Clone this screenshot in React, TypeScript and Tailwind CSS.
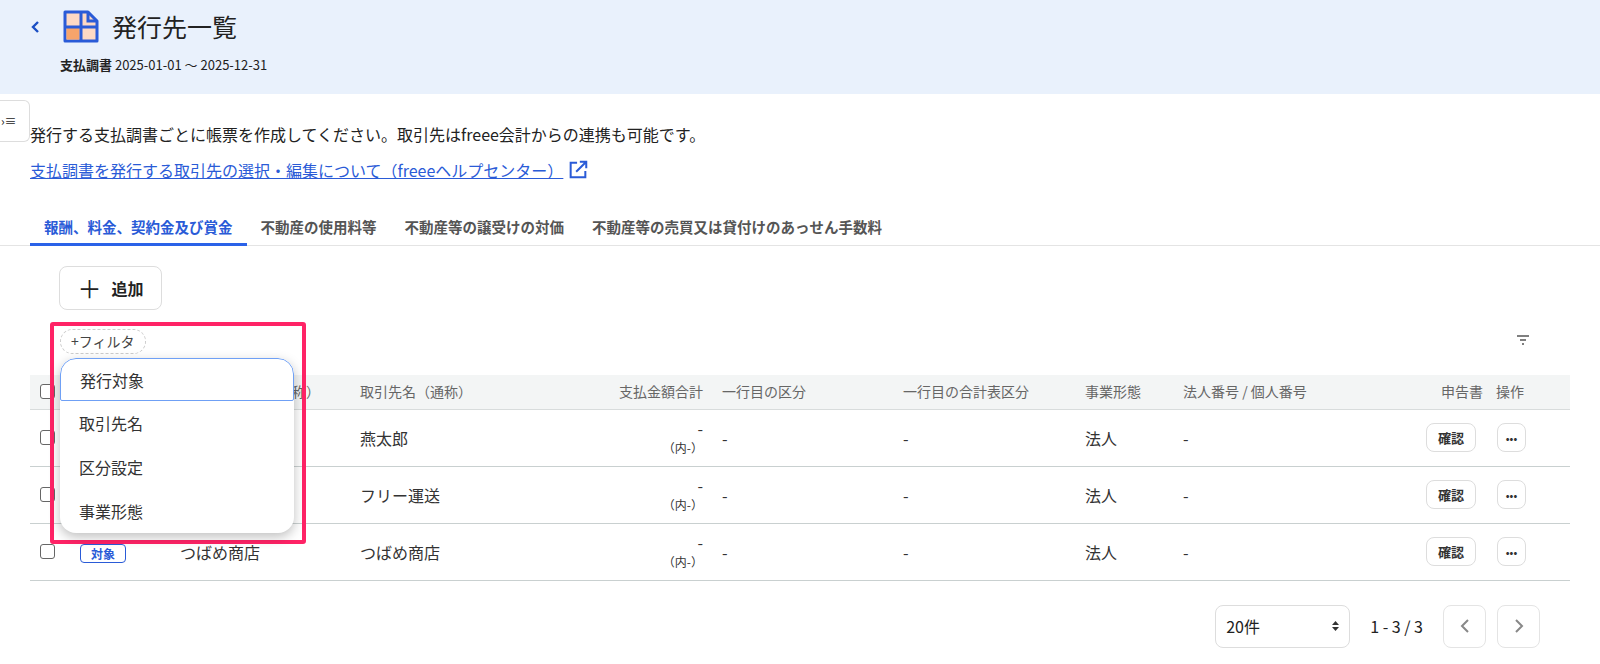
import React from "react";

const F = { fontFamily: '"Noto Sans CJK JP", "Noto Sans", sans-serif' };
const cols = "grid grid-cols-[40px_100px_180px_250px_112px_181px_182px_98px_227px_86px_62px]";

function Box() {
  return <span className="inline-block w-[15px] h-[15px] border border-[#666] rounded-[3px] bg-white" />;
}

const rows = [
  { a: "燕太郎", b: "燕太郎" },
  { a: "フリー運送", b: "フリー運送" },
  { a: "つばめ商店", b: "つばめ商店" },
];

export default function App() {
  return (
    <div style={F} className="w-[1600px] h-[664px] overflow-hidden bg-white text-[#222] relative">
      <div className="h-[94px] bg-[#e9f1fc] pl-[30px] pt-[10px]">
        <div className="flex items-center h-[34px]">
          <svg width="12" height="14" viewBox="0 0 12 14" className="mr-[20px]"><path d="M8 2 L3 7 L8 12" stroke="#1b4fc4" strokeWidth="2.4" fill="none" /></svg>
          <svg width="38" height="34" viewBox="0 0 38 34">
            <path d="M3 2 H26 L35 11 V31 H3 Z" fill="#fdd9c4" stroke="#2a5bd7" strokeWidth="3" strokeLinejoin="round" />
            <rect x="4.5" y="18" width="13" height="11.5" fill="#f7a46b" />
            <path d="M19 2 V31 M3 17 H35 M26 2 V11 H35" stroke="#2a5bd7" strokeWidth="3" fill="none" />
          </svg>
          <span className="ml-[12px] text-[25px] text-[#222]">発行先一覧</span>
        </div>
        <div className="mt-[11px] pl-[30px] text-[13px]"><span className="font-bold">支払調書</span> 2025-01-01 ～ 2025-12-31</div>
      </div>
      <div className="absolute left-0 top-[100px] w-[30px] h-[42px] bg-white border border-[#ddd] border-l-0 rounded-r-md flex items-center justify-start pl-[1px] text-[12px]">›≡</div>
      <div className="px-[30px]">
        <div className="mt-[28px] text-[16px]">発行する支払調書ごとに帳票を作成してください。取引先はfreee会計からの連携も可能です。</div>
        <div className="mt-[12px] flex items-center text-[16px] text-[#2a5bd7]">
          <span className="underline">支払調書を発行する取引先の選択・編集について（freeeヘルプセンター）</span>
          <svg width="22" height="22" viewBox="0 0 24 24" className="ml-[4px]" fill="none" stroke="#2a5bd7" strokeWidth="2.2"><path d="M11 4H4v16h16v-7M14 3h7v7M21 3 10 14" /></svg>
        </div>
      </div>
      <div className="mt-[34px] border-b border-[#e4e4e4] flex pl-[30px] text-[14.5px] font-bold text-[#555]">
        <div className="px-[14px] pb-[5px] text-[#2a5bd7] border-b-[3px] border-[#2a62e8] -mb-px">報酬、料金、契約金及び賞金</div>
        <div className="px-[14px] pb-[5px]">不動産の使用料等</div>
        <div className="px-[14px] pb-[5px]">不動産等の譲受けの対価</div>
        <div className="px-[14px] pb-[5px]">不動産等の売買又は貸付けのあっせん手数料</div>
      </div>
      <div className="px-[30px]">
        <div className="mt-[20px] ml-[29px] w-[103px] h-[44px] border border-[#ddd] rounded-lg flex items-center justify-center gap-[10px] text-[16px] font-bold">
          <span className="text-[24px] font-normal leading-none">＋</span>
          <span>追加</span>
        </div>
        <div className="h-[65px] flex items-end justify-end pr-[40px] pb-[30px]">
          <svg width="14" height="10" viewBox="0 0 14 10"><path d="M1 1h12M4 5h6M6 9h2" stroke="#555" strokeWidth="1.5" /></svg>
        </div>
        <div>
          <div className={`${cols} h-[35px] items-center bg-[#f3f5f5] border-b border-[#d8dcdc] text-[14px] text-[#666]`}>
            <div className="pl-[10px] flex"><Box /></div>
            <div className="pl-[10px]">発行対象</div>
            <div className="pl-[10px]">取引先名（正式名称）</div>
            <div className="pl-[10px]">取引先名（通称）</div>
            <div className="text-right pr-[9px]">支払金額合計</div>
            <div className="pl-[10px]">一行目の区分</div>
            <div className="pl-[10px]">一行目の合計表区分</div>
            <div className="pl-[10px]">事業形態</div>
            <div className="pl-[10px]">法人番号 / 個人番号</div>
            <div className="text-right pr-[3px]">申告書</div>
            <div className="pl-[10px]">操作</div>
          </div>
          {rows.map((r, i) => (
            <div key={i} className={`${cols} h-[57px] items-center border-b border-[#c9d0d0] text-[16px] text-[#333]`}>
              <div className="pl-[10px] flex"><Box /></div>
              <div className="pl-[10px]"><span className="inline-block px-[10px] border border-[#2a5bd7] rounded text-[12px] font-bold text-[#2a5bd7] leading-[17px]">対象</span></div>
              <div className="pl-[10px]">{r.a}</div>
              <div className="pl-[10px]">{r.b}</div>
              <div className="text-right pr-[9px] leading-[19px]"><div>-</div><div className="text-[12px]">（内-）</div></div>
              <div className="pl-[10px]">-</div>
              <div className="pl-[10px]">-</div>
              <div className="pl-[10px]">法人</div>
              <div className="pl-[10px]">-</div>
              <div className="flex justify-end pr-[10px]"><span className="w-[50px] h-[29px] border border-[#ddd] rounded-lg flex items-center justify-center text-[13px] font-bold">確認</span></div>
              <div className="pl-[11px]"><span className="w-[29px] h-[29px] border border-[#ddd] rounded-lg flex items-center justify-center text-[10px] font-bold leading-none">•••</span></div>
            </div>
          ))}
        </div>
        <div className="mt-[24px] flex items-center justify-end pr-[30px] text-[16px]">
          <div className="w-[135px] h-[43px] border border-[#ddd] rounded-lg flex items-center justify-between px-[10px]">
            <span>20件</span>
            <svg width="7" height="12" viewBox="0 0 7 12"><path d="M0 5 3.5 1 7 5ZM0 7h7L3.5 11Z" fill="#333" /></svg>
          </div>
          <span className="ml-[20px] mr-[20px]">1 - 3 / 3</span>
          <div className="w-[43px] h-[43px] border border-[#e4e4e4] rounded-lg flex items-center justify-center"><svg width="10" height="14" viewBox="0 0 10 14"><path d="M8 1 2 7l6 6" stroke="#888" strokeWidth="2" fill="none" /></svg></div>
          <div className="ml-[11px] w-[43px] h-[43px] border border-[#e4e4e4] rounded-lg flex items-center justify-center"><svg width="10" height="14" viewBox="0 0 10 14"><path d="M2 1l6 6-6 6" stroke="#888" strokeWidth="2" fill="none" /></svg></div>
        </div>
      </div>
      <div className="absolute left-[50px] top-[322px] w-[256px] h-[222px] border-[4px] border-[#ff2366] rounded-[3px]">
        <div className="absolute left-[6px] top-[3px] h-[25px] px-[10px] border border-dashed border-[#ccc] rounded-full flex items-center text-[14px] text-[#444] bg-white">+フィルタ</div>
        <div className="absolute left-[6px] top-[32px] w-[234px] bg-white rounded-[16px] shadow-[0_4px_12px_rgba(0,0,0,0.25)] text-[16px] text-[#333] overflow-hidden">
          <div className="h-[43px] flex items-center pl-[19px] border border-[#6fa0f5] rounded-t-[16px] rounded-b-[2px]">発行対象</div>
          <div className="h-[44px] flex items-center pl-[19px]">取引先名</div>
          <div className="h-[44px] flex items-center pl-[19px]">区分設定</div>
          <div className="h-[44px] flex items-center pl-[19px]">事業形態</div>
        </div>
      </div>
    </div>
  );
}
